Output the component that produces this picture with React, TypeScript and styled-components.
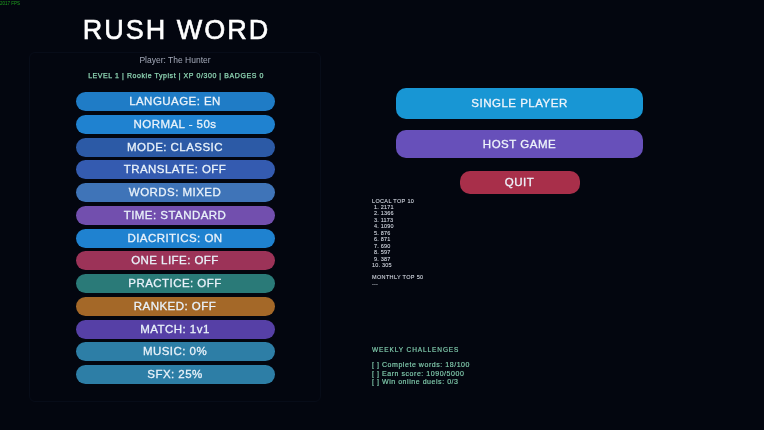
import React from "react";
import styled, { createGlobalStyle } from "styled-components";

const GlobalStyle = createGlobalStyle`
  html, body {
    margin: 0;
    padding: 0;
    width: 764px;
    height: 430px;
    overflow: hidden;
    background: #03060f;
  }
`;

const Page = styled.div`
  position: relative;
  display: flex;
  align-items: flex-start;
  width: 764px;
  height: 430px;
  padding: 14px 0 0 29px;
  box-sizing: border-box;
  background: #03060f;
  color: #fff;
  font-family: "Liberation Sans", Arial, sans-serif;
  filter: blur(0.3px);
`;

const Fps = styled.div`
  position: absolute;
  top: 1px;
  left: 0;
  font-size: 4.5px;
  color: #1fa01f;
`;

const LeftColumn = styled.div`
  display: flex;
  flex-direction: column;
  width: 292px;
`;

const Title = styled.h1`
  margin: 0 0 6px;
  padding-left: 3px;
  height: 32px;
  line-height: 32px;
  font-size: 27px;
  font-weight: 400;
  letter-spacing: 2px;
  text-align: center;
  -webkit-text-stroke: 0.6px #fff;
`;

const Panel = styled.div`
  display: flex;
  flex-direction: column;
  align-items: center;
  height: 350px;
  box-sizing: border-box;
  padding-top: 1px;
  border: 1px solid #070c18;
  border-radius: 6px;
`;

const Player = styled.div`
  height: 12px;
  line-height: 12px;
  font-size: 8.5px;
  color: #a3a9b8;
`;

const Stats = styled.div`
  margin: 5px 0 11px;
  padding-left: 2px;
  height: 10px;
  line-height: 10px;
  font-size: 7px;
  font-weight: 400;
  letter-spacing: 0.57px;
  color: #8fd6b4;
  -webkit-text-stroke: 0.25px #8fd6b4;
`;

const OptionList = styled.div`
  display: flex;
  flex-direction: column;
  gap: 3.75px;
`;

const OptionButton = styled.div<{ $bg: string }>`
  width: 199px;
  height: 19px;
  line-height: 19px;
  border-radius: 10px;
  background: ${(p) => p.$bg};
  color: #e9f2fa;
  font-size: 11.5px;
  font-weight: 400;
  letter-spacing: 0.45px;
  text-align: center;
  -webkit-text-stroke: 0.3px #e9f2fa;
`;

const RightColumn = styled.div`
  display: flex;
  flex-direction: column;
  width: 272px;
  margin: 74px 0 0 51px;
`;

const ActionStack = styled.div`
  display: flex;
  flex-direction: column;
  align-items: center;
  margin-left: 24px;
  width: 247px;
`;

const ActionButton = styled.div<{ $bg: string; $w: number; $h: number; $r: number; $mb: number }>`
  width: ${(p) => p.$w}px;
  height: ${(p) => p.$h}px;
  line-height: ${(p) => p.$h}px;
  margin-bottom: ${(p) => p.$mb}px;
  border-radius: ${(p) => p.$r}px;
  background: ${(p) => p.$bg};
  color: #eef4fb;
  font-size: 11.5px;
  font-weight: 400;
  letter-spacing: 0.5px;
  text-align: center;
  -webkit-text-stroke: 0.3px #eef4fb;
`;

const ScoreBlock = styled.div`
  margin-top: 3.5px;
  font-size: 5.5px;
  line-height: 6.45px;
  color: #d0d5de;
  white-space: pre;
  letter-spacing: 0.2px;
  -webkit-text-stroke: 0.1px #d0d5de;
`;

const ScoreHeading = styled.div<{ $gap?: number }>`
  margin-top: ${(p) => p.$gap ?? 0}px;
  letter-spacing: 0.35px;
`;

const ScoreRow = styled.div<{ $indent: boolean }>`
  padding-left: ${(p) => (p.$indent ? 2 : 0)}px;
`;

const Challenges = styled.div`
  margin-top: 57.5px;
  color: #83cfb0;
  font-size: 7px;
  letter-spacing: 0.55px;
  -webkit-text-stroke: 0.15px #83cfb0;
`;

const ChallengeHeading = styled.div`
  height: 9px;
  line-height: 9px;
  margin-bottom: 7.5px;
  font-size: 6.5px;
  letter-spacing: 0.9px;
`;

const ChallengeRow = styled.div`
  height: 8.5px;
  line-height: 8.5px;
`;

const options: [string, string][] = [
  ["LANGUAGE: EN", "#1f7cc6"],
  ["NORMAL - 50s", "#1f82d0"],
  ["MODE: CLASSIC", "#2c5aa6"],
  ["TRANSLATE: OFF", "#345bb0"],
  ["WORDS: MIXED", "#3f74b8"],
  ["TIME: STANDARD", "#724fae"],
  ["DIACRITICS: ON", "#1f82d0"],
  ["ONE LIFE: OFF", "#9c3358"],
  ["PRACTICE: OFF", "#2a7a78"],
  ["RANKED: OFF", "#a46828"],
  ["MATCH: 1v1", "#5640a6"],
  ["MUSIC: 0%", "#2d7ea6"],
  ["SFX: 25%", "#2d7ea6"],
];

const scores = [2171, 1366, 1173, 1090, 876, 871, 690, 597, 387, 305];

const App: React.FC = () => {
  return (
    <Page>
      <GlobalStyle />
      <Fps>2017 FPS</Fps>
      <LeftColumn>
        <Title>RUSH WORD</Title>
        <Panel>
          <Player>Player: The Hunter</Player>
          <Stats>LEVEL 1 | Rookie Typist | XP 0/300 | BADGES 0</Stats>
          <OptionList>
            {options.map(([label, bg]) => (
              <OptionButton key={label} $bg={bg}>
                {label}
              </OptionButton>
            ))}
          </OptionList>
        </Panel>
      </LeftColumn>
      <RightColumn>
        <ActionStack>
          <ActionButton $bg="#1896d4" $w={247} $h={31} $r={10} $mb={11}>
            SINGLE PLAYER
          </ActionButton>
          <ActionButton $bg="#6750ba" $w={247} $h={28} $r={10} $mb={13}>
            HOST GAME
          </ActionButton>
          <ActionButton $bg="#a82f4a" $w={120} $h={23} $r={10} $mb={0}>
            QUIT
          </ActionButton>
        </ActionStack>
        <ScoreBlock>
          <ScoreHeading>LOCAL TOP 10</ScoreHeading>
          {scores.map((s, i) => (
            <ScoreRow key={s} $indent={i < 9}>{`${i + 1}. ${s}`}</ScoreRow>
          ))}
          <ScoreHeading $gap={6}>MONTHLY TOP 50</ScoreHeading>
          <div>---</div>
        </ScoreBlock>
        <Challenges>
          <ChallengeHeading>WEEKLY CHALLENGES</ChallengeHeading>
          <ChallengeRow>[ ] Complete words: 18/100</ChallengeRow>
          <ChallengeRow>[ ] Earn score: 1090/5000</ChallengeRow>
          <ChallengeRow>[ ] Win online duels: 0/3</ChallengeRow>
        </Challenges>
      </RightColumn>
    </Page>
  );
};

export default App;
